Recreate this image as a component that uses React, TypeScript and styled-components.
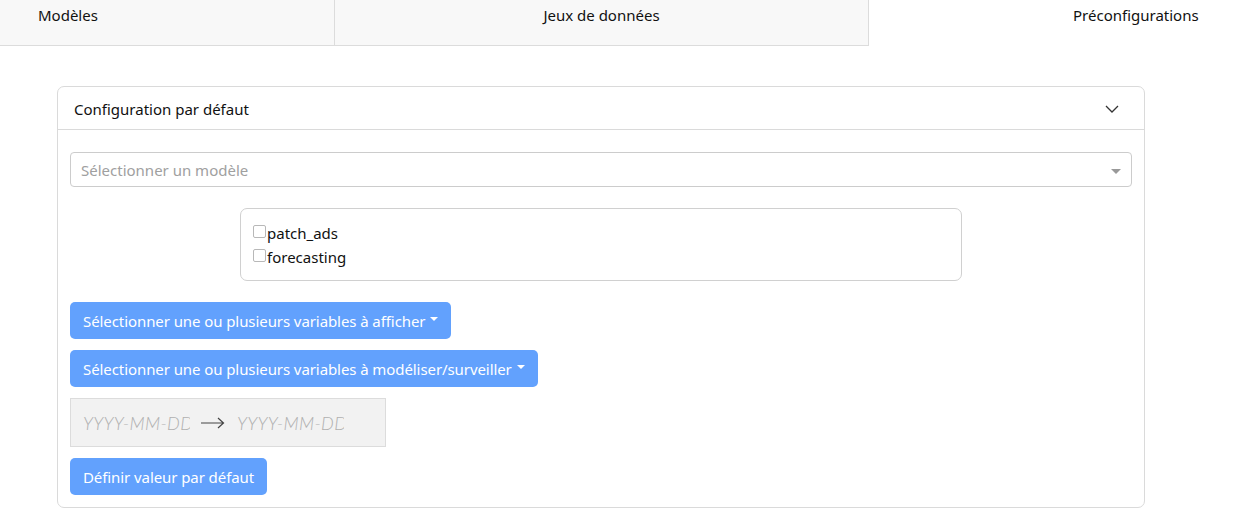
import React from "react";
import styled, { createGlobalStyle } from "styled-components";

const GlobalStyle = createGlobalStyle`
  html, body {
    margin: 0;
    padding: 0;
    background: #ffffff;
    font-family: "Noto Sans", "Open Sans", sans-serif;
    color: #212529;
    overflow: hidden;
  }
`;

const Page = styled.div`
  width: 1244px;
  height: 517px;
  overflow: hidden;
`;

const TabBar = styled.div`
  display: grid;
  grid-template-columns: 335px 534px 1fr;
  height: 46px;
`;

const Tab = styled.div<{ $active?: boolean; $indent?: number }>`
  box-sizing: border-box;
  height: 46px;
  padding-top: 4px;
  font-size: 15px;
  line-height: 22px;
  text-align: ${(p) => (p.$indent === undefined ? "center" : "left")};
  padding-left: ${(p) => p.$indent ?? 0}px;
  background: ${(p) => (p.$active ? "#ffffff" : "#f8f8f8")};
  border-bottom: ${(p) => (p.$active ? "none" : "1px solid #dcdcdc")};
  border-right: ${(p) => (p.$active ? "none" : "1px solid #dcdcdc")};
  color: #111;
`;

const Content = styled.div`
  padding: 40px 100px 0 57px;
`;

const Card = styled.div`
  border: 1px solid #dadada;
  border-radius: 7px;
  width: 1088px;
  box-sizing: border-box;
`;

const CardHeader = styled.div`
  display: flex;
  align-items: center;
  justify-content: space-between;
  height: 41px;
  padding: 1px 25px 0 16px;
  border-bottom: 1px solid #dadada;
  font-size: 15px;
  color: #111;
`;

const CardBody = styled.div`
  display: flex;
  flex-direction: column;
  align-items: flex-start;
  padding: 22px 12px 12px 12px;
`;

const Select = styled.div`
  box-sizing: border-box;
  width: 100%;
  height: 35px;
  border: 1px solid #cccccc;
  border-radius: 4px;
  display: flex;
  align-items: center;
  justify-content: space-between;
  padding: 0 10px 0 10px;
  color: #a0a0a0;
  font-size: 15px;
`;

const SelectCaret = styled.span`
  width: 0;
  height: 0;
  border-left: 5px solid transparent;
  border-right: 5px solid transparent;
  border-top: 5px solid #999;
  margin-top: 3px;
`;

const CheckPanel = styled.div`
  box-sizing: border-box;
  align-self: center;
  width: 722px;
  margin-top: 21px;
  padding: 12px 12px 11px 12px;
  border: 1px solid #d0d0d0;
  border-radius: 7px;
  display: flex;
  flex-direction: column;
`;

const CheckRow = styled.label`
  display: flex;
  align-items: center;
  font-size: 15px;
  line-height: 24px;
  color: #111;
`;

const Box = styled.span`
  width: 11px;
  height: 11px;
  border: 1px solid #b8b8b8;
  border-radius: 2px;
  margin-right: 1px;
  margin-top: -4px;
`;

const Button = styled.button<{ $top: number }>`
  margin-top: ${(p) => p.$top}px;
  height: 37px;
  padding: 0 13px;
  border: none;
  border-radius: 5px;
  background: #62a1fd;
  color: #ffffff;
  font-family: inherit;
  font-size: 15px;
  letter-spacing: -0.08px;
  display: flex;
  align-items: center;
  gap: 5px;
`;

const DropCaret = styled.span`
  width: 0;
  height: 0;
  border-left: 4px solid transparent;
  border-right: 4px solid transparent;
  border-top: 4px solid #ffffff;
  margin-top: -4px;
`;

const DateRange = styled.div`
  box-sizing: border-box;
  margin-top: 11px;
  width: 316px;
  height: 49px;
  background: #f2f2f2;
  border: 1px solid #dcdcdc;
  display: flex;
  align-items: center;
  padding: 0 12px;
  gap: 11px;
`;

const DateText = styled.span`
  width: 107px;
  overflow: hidden;
  white-space: nowrap;
  font-family: "Lato", sans-serif;
  font-style: italic;
  font-weight: 300;
  font-size: 18px;
  color: #b0b0b0;
  letter-spacing: 0.3px;
`;

const Arrow = styled.svg`
  width: 24px;
  height: 12px;
  margin-right: 1px;
`;

const Chevron = styled.svg`
  width: 14px;
  height: 8px;
`;

export default function App() {
  return (
    <Page>
      <GlobalStyle />
      <TabBar>
        <Tab $indent={38}>Modèles</Tab>
        <Tab>Jeux de données</Tab>
        <Tab $active $indent={204}>
          Préconfigurations
        </Tab>
      </TabBar>
      <Content>
        <Card>
          <CardHeader>
            <span>Configuration par défaut</span>
            <Chevron viewBox="0 0 14 8">
              <path d="M1 1 L7 7 L13 1" fill="none" stroke="#333" strokeWidth="1.3" />
            </Chevron>
          </CardHeader>
          <CardBody>
            <Select>
              <span>Sélectionner un modèle</span>
              <SelectCaret />
            </Select>
            <CheckPanel>
              <CheckRow>
                <Box />
                patch_ads
              </CheckRow>
              <CheckRow>
                <Box />
                forecasting
              </CheckRow>
            </CheckPanel>
            <Button $top={21}>
              Sélectionner une ou plusieurs variables à afficher
              <DropCaret />
            </Button>
            <Button $top={11}>
              Sélectionner une ou plusieurs variables à modéliser/surveiller
              <DropCaret />
            </Button>
            <DateRange>
              <DateText>YYYY-MM-DD</DateText>
              <Arrow viewBox="0 0 24 12">
                <path d="M0 6 H22 M17 1 L22.5 6 L17 11" fill="none" stroke="#444" strokeWidth="1.2" />
              </Arrow>
              <DateText>YYYY-MM-DD</DateText>
            </DateRange>
            <Button $top={11}>Définir valeur par défaut</Button>
          </CardBody>
        </Card>
      </Content>
    </Page>
  );
}
